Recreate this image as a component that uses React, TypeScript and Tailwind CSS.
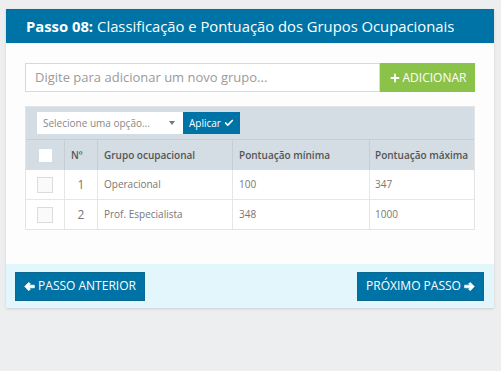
import { Check, Plus } from "lucide-react";

const rows = [
  { n: 1, name: "Operacional", min: "100", max: "347" },
  { n: 2, name: "Prof. Especialista", min: "348", max: "1000" },
];

const Box = ({ header }: { header?: boolean }) => (
  <div
    className={
      header
        ? "w-[15px] h-[15px] bg-white border border-[#d6dde2]"
        : "w-[16px] h-[16px] bg-[#fafafa] border border-[#dcdcdc]"
    }
  />
);

// font awesome style solid arrow
const Arrow = ({ right }: { right?: boolean }) => (
  <svg
    viewBox="0 0 12 12"
    className={`w-[11px] h-[11px] ${right ? "rotate-180" : ""}`}
    fill="currentColor"
    stroke="currentColor"
    strokeWidth={0.8}
    strokeLinejoin="round"
  >
    <polygon points="0.8,6 5.2,1.5 7,3.3 5,4.6 11.3,4.6 11.3,7.4 5,7.4 7,8.7 5.2,10.5" />
  </svg>
);

export default function App() {
  return (
    <div className="w-[501px] h-[371px] bg-[#eceef0] pt-[9px] px-[6px] font-['Open_Sans',sans-serif]">
      <div className="w-[488px] shadow-sm">
        <div className="h-[34px] bg-[#0073a6] flex items-center pl-[20px] text-white text-[14.8px] leading-none">
          <span className="font-bold">Passo 08:</span>
          <span className="ml-[4px]">Classificação e Pontuação dos Grupos Ocupacionais</span>
        </div>

        <div className="bg-[#fdfdfd] px-[19px] pt-[20px] pb-[34px]">
          <div className="flex h-[29px]">
            <div className="flex-1 border border-[#d9d9d9] bg-white flex items-center pl-[9px] text-[13px] text-[#9a9a9a]">
              Digite para adicionar um novo grupo...
            </div>
            <div className="w-[95px] bg-[#8bc34a] text-white flex items-center justify-center gap-[2px] text-[12px]">
              <Plus className="w-[12px] h-[12px]" strokeWidth={4} />
              ADICIONAR
            </div>
          </div>

          <div className="mt-[14px] border border-[#e4e4e4]">
            <div className="h-[32px] bg-[#d3dde3] flex items-center pl-[11px]">
              <div className="w-[146px] h-[22px] bg-white flex items-center justify-between pl-[6px] pr-[8px] text-[10px] text-[#888]">
                Selecione uma opção...
                <svg viewBox="0 0 6 4" className="w-[6px] h-[4px]" fill="#777">
                  <polygon points="0,0 6,0 3,4" />
                </svg>
              </div>
              <div className="w-[57px] h-[22px] bg-[#0073a6] text-white flex items-center justify-center gap-[3px] text-[10px]">
                Aplicar
                <Check className="w-[10px] h-[10px]" strokeWidth={4} />
              </div>
            </div>

            <div className="grid grid-cols-[39px_33px_135px_137px_1fr] text-[10px]">
              <div className="h-[31px] bg-[#d3dde3] border-t border-[#c3ced5] flex items-center justify-center border-r border-r-[#c3ced5]">
                <Box header />
              </div>
              <div className="h-[31px] bg-[#d3dde3] border-t border-[#c3ced5] flex items-center pl-[6px] font-semibold text-[#555] border-r border-r-[#c3ced5]">
                Nº
              </div>
              <div className="h-[31px] bg-[#d3dde3] border-t border-[#c3ced5] flex items-center pl-[6px] font-semibold text-[#555] border-r border-r-[#c3ced5]">
                Grupo ocupacional
              </div>
              <div className="h-[31px] bg-[#d3dde3] border-t border-[#c3ced5] flex items-center pl-[6px] font-semibold text-[#555] border-r border-r-[#c3ced5]">
                Pontuação mínima
              </div>
              <div className="h-[31px] bg-[#d3dde3] border-t border-[#c3ced5] flex items-center pl-[5px] font-semibold text-[#555]">
                Pontuação máxima
              </div>

              {rows.map((r, i) => {
                const cell = i ? "h-[30px] border-t" : "h-[29px]";
                return (
                  <div key={r.n} className="contents">
                    <div className={`${cell} bg-white flex items-center justify-center border-r border-[#e6e6e6]`}>
                      <Box />
                    </div>
                    <div className={`${cell} bg-white flex items-center justify-center text-[12px] text-[#777] border-r border-[#e6e6e6]`}>
                      {r.n}
                    </div>
                    <div className={`${cell} bg-white flex items-center pl-[6px] text-[#777] border-r border-[#e6e6e6]`}>
                      {r.name}
                    </div>
                    <div className={`${cell} bg-white flex items-center pl-[6px] text-[#777] border-r border-[#e6e6e6]`}>
                      {r.min}
                    </div>
                    <div className={`${cell} bg-white flex items-center pl-[5px] text-[#777] border-[#e6e6e6]`}>
                      {r.max}
                    </div>
                  </div>
                );
              })}
            </div>
          </div>
        </div>

        <div className="h-[44px] bg-[#e3f6fb] flex items-center justify-between pl-[9px] pr-[10px]">
          <div className="w-[130px] h-[29px] bg-[#0073a6] border border-[#0a6a94] text-white flex items-center justify-center gap-[3px] text-[12px] font-medium">
            <Arrow />
            PASSO ANTERIOR
          </div>
          <div className="w-[127px] h-[29px] bg-[#0073a6] border border-[#0a6a94] text-white flex items-center justify-center gap-[3px] text-[12px] font-medium">
            PRÓXIMO PASSO
            <Arrow right />
          </div>
        </div>
      </div>
    </div>
  );
}
